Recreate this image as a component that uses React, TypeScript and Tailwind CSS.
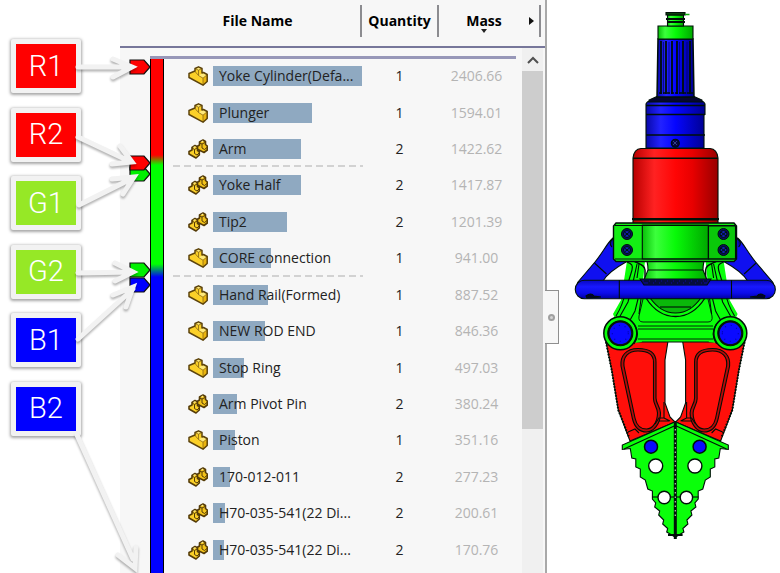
type Part = {
  name: string;
  quantity: number;
  mass: number;
  assembly?: boolean;
  lastOfBand?: boolean;
};

const parts: Part[] = [
  { name: "Yoke Cylinder(Defa...", quantity: 1, mass: 2406.66 },
  { name: "Plunger", quantity: 1, mass: 1594.01 },
  { name: "Arm", quantity: 2, mass: 1422.62, assembly: true, lastOfBand: true },
  { name: "Yoke Half", quantity: 2, mass: 1417.87, assembly: true },
  { name: "Tip2", quantity: 2, mass: 1201.39, assembly: true },
  { name: "CORE connection", quantity: 1, mass: 941.0, lastOfBand: true },
  { name: "Hand Rail(Formed)", quantity: 1, mass: 887.52 },
  { name: "NEW ROD END", quantity: 1, mass: 846.36 },
  { name: "Stop Ring", quantity: 1, mass: 497.03 },
  { name: "Arm Pivot Pin", quantity: 2, mass: 380.24, assembly: true },
  { name: "Piston", quantity: 1, mass: 351.16 },
  { name: "170-012-011", quantity: 2, mass: 277.23, assembly: true },
  { name: "H70-035-541(22 Di...", quantity: 2, mass: 200.61, assembly: true },
  { name: "H70-035-541(22 Di...", quantity: 2, mass: 170.76, assembly: true },
];

const maxMass = 2406.66;

const callouts = [
  { label: "R1", color: "bg-[#ff0000]" },
  { label: "R2", color: "bg-[#ff0000]" },
  { label: "G1", color: "bg-[#96e826]" },
  { label: "G2", color: "bg-[#96e826]" },
  { label: "B1", color: "bg-[#0000ff]" },
  { label: "B2", color: "bg-[#0000ff]" },
];

function PartIcon() {
  return (
    <svg viewBox="0 0 20 20" className="h-5 w-5" stroke="#5c430c" strokeLinejoin="round">
      <path d="M1 7.5 7 5V2.5l3.500-1.700L14 2.500V7l1.500-.5L19.200 8.500v7L15 19.200 1 11.500z" fill="#fbd028" stroke="none" />
      <path d="M15 12.500 19.200 8.500v7L15 19.200z" fill="#eab510" stroke="none" />
      <path d="M7 2.500 10.500.8 14 2.500 10.500 4.200zM10.500 9.500 15.500 6.500l3.700 2L15 12z" fill="#ffe97a" stroke="none" />
      <path d="M7 5.500 10.500 9.500M10.500 4.200v5.300l4.500 2.700V19M7 2.500l3.500 1.700L14 2.500M15 12.200l4.200-3.500" fill="none" stroke="#8a6812" strokeWidth=".8" />
      <path d="M1 7.500 7 5V2.500l3.500-1.700L14 2.500V7l1.500-.5L19.200 8.500v7L15 19.200 1 11.500z" fill="none" strokeWidth="1.500" />
    </svg>
  );
}

function AssemblyIcon() {
  return (
    <svg viewBox="0 0 20 20" className="h-5 w-5" stroke="#553c08" strokeLinejoin="round">
      <path d="M9 7.500 11.500 6V3L15 1l2.500 1.500v3L19.300 7v4L16 13.500 9 10z" fill="#f3c31a" strokeWidth="1.600" />
      <path d="m11.500 4 2.500 1v4l2.500 1.500M14 5l3-1.500M16.500 10.500l2.500-2" fill="none" strokeWidth="1" />
      <path d="M1 12.500 4 11V8.500L7 6.500 9.500 8v3.500l1.800 1V16L8 19 1 15z" fill="#fbd028" strokeWidth="1.600" />
      <path d="m4 9 2.500 1.500v4L9 16M6.500 10.500 9 9M9 16l2-2" fill="none" strokeWidth="1" />
      <path d="m5.500 8.500 2-1M13.500 3 15 2" stroke="#ffef95" strokeWidth="1.200" />
    </svg>
  );
}

function Callouts() {
  return (
    <aside className="w-[120px] shrink-0 bg-white pt-[39px] pl-[11px]">
      <ul className="flex h-[397px] flex-col justify-between">
        {callouts.map((c) => (
          <li
            key={c.label}
            className="h-[54px] w-[70px] rounded-xs bg-[#f2f2f2] p-[5px] shadow-[0_1px_3px_1px_rgba(0,0,0,0.35)]"
          >
            <div
              className={`flex h-full items-center justify-center font-['Roboto',sans-serif] text-[29px] leading-none font-light text-white ${c.color}`}
            >
              {c.label}
            </div>
          </li>
        ))}
      </ul>
    </aside>
  );
}

function Arrows() {
  return (
    <svg
      viewBox="0 0 160 573"
      className="pointer-events-none absolute top-0 left-0 h-[573px] w-40 drop-shadow-[0_2px_1px_rgba(0,0,0,0.3)]"
      fill="none"
      stroke="#f2f2f2"
      strokeWidth="6"
      strokeLinecap="round"
    >
      <path d="M78 67H131M113 59l19 8-19 10" strokeWidth="5" />
      <path d="m78 137 53 25M120 146l12 16-20 2" strokeWidth="5" />
      <path d="m79 205 54-27M112 179l22-2-11 17" strokeWidth="5" />
      <path d="m78 273 54-1M115 263l18 9-18 9" strokeWidth="5" />
      <path d="m78 339 55-50M113 295l20-8-7 20" strokeWidth="5" />
      <path d="m77 435 56 124M118 555l17 13 1-21" strokeWidth="5" />
    </svg>
  );
}

function ColorScale() {
  return (
    <div className="flex w-[44px] shrink-0 pt-[10px]">
      <svg viewBox="0 0 30 500" className="h-[500px] w-[30px] shrink-0" stroke="#111" strokeWidth="1.2">
        <path d="M10 109h14l6 7-6 7H10z" fill="#00f000" />
        <path d="M10 2h14l6 7-6 7H10z" fill="#f00" />
        <path d="M10 98h14l6 7-6 7H10z" fill="#f00" />
        <path d="M10 205h14l6 7-6 7H10z" fill="#00f000" />
        <path d="M10 220h14l6 7-6 7H10z" fill="#00f" />
      </svg>
      <div className="w-[14px] border-x border-t border-black bg-[linear-gradient(#f00_96px,#0f0_106px,#0f0_205px,#00f_218px)]" />
    </div>
  );
}

function PanelHeader() {
  return (
    <div className="h-12 border-b-2 border-[#77779a] pt-[5px] text-black">
      <div className="flex h-8 pl-[35px] text-sm font-bold">
        <button className="flex-1 border-r-2 border-[#8c8c90]">File Name</button>
        <button className="w-[77px] border-r-2 border-[#8c8c90]">Quantity</button>
        <button className="relative w-[90px]">
          Mass
          <svg viewBox="0 0 6 4" className="absolute bottom-1 left-[42px] h-1 w-1.5">
            <path d="M0 0h6L3 4z" fill="#222" />
          </svg>
        </button>
        <button aria-label="More columns" className="mr-1 w-3 border-r-2 border-[#8c8c90]">
          <svg viewBox="0 0 5 8" className="h-2 w-[5px]">
            <path d="M0 0v8l5-4z" fill="#111" />
          </svg>
        </button>
      </div>
    </div>
  );
}

function PartTable() {
  return (
    <div className="mt-2 mr-[6px] -ml-[14px] flex-1 border-t-3 border-[#9797b8] pl-[14px]">
      <table className="-mt-px h-[510px] w-full table-fixed text-sm text-[#222]">
        <colgroup>
          <col className="w-[49px]" />
          <col />
          <col className="w-[77px]" />
          <col className="w-[77px]" />
        </colgroup>
        <tbody>
          {parts.map((part, i) => (
            <tr key={i}>
              <td className="relative pl-6">
                {part.assembly ? <AssemblyIcon /> : <PartIcon />}
                {part.lastOfBand && (
                  <svg className="absolute bottom-0 left-[9px] h-0.5 w-[190px]">
                    <path d="M0 1h190" stroke="#d2d2d2" strokeWidth="2" strokeDasharray="7 4" />
                  </svg>
                )}
              </td>
              <td>
                <div className="relative flex h-5 items-center">
                  <div
                    className="absolute inset-y-0 left-0 bg-[#8fa9c1]"
                    style={{ width: `${(part.mass / maxMass) * 100}%` }}
                  />
                  <span className="relative pl-1.5 whitespace-nowrap">{part.name}</span>
                </div>
              </td>
              <td className="pr-0.5 text-center">{part.quantity}</td>
              <td className="pr-0.5 text-center text-[#b4b4b4]">{part.mass.toFixed(2)}</td>
            </tr>
          ))}
        </tbody>
      </table>
    </div>
  );
}

function Scrollbar() {
  return (
    <div className="mr-0.5 w-[21px] shrink-0 bg-[#f0f0f0] pt-px">
      <button aria-label="Scroll up" className="flex h-[22px] w-full items-center justify-center">
        <svg viewBox="0 0 12 8" className="h-2 w-3" fill="none" stroke="#505050" strokeWidth="2">
          <path d="m1 7 5-5 5 5" />
        </svg>
      </button>
      <div className="h-[358px] bg-[#cdcdcd]" />
    </div>
  );
}

function Bolt({ x, y }: { x: number; y: number }) {
  return (
    <g strokeWidth="1">
      <circle cx={x} cy={y} r="5.5" fill="#0a1060" />
      <circle cx={x} cy={y} r="3.5" fill="#1020b0" />
      <path d={`M${x - 2.5} ${y - 2}l5 4m0-4l-5 4`} />
    </g>
  );
}

// One side of the jaw; the other side is the same drawing mirrored on x = 675.3
function JawSide() {
  return (
    <g>
      <path d="M606 342 611.7 370 618.3 410 630 441l45-19-5-5-5-14V360l3-19z" fill="#ff0f0a" />
      <path d="M606 342 611.7 370 618.3 410 629 437" fill="none" strokeWidth="2" strokeDasharray="1.5 1.5" />
      <path d="M656 362v36c0 6 4.500 9 4.500 15 0 11-7 19-14 19-8 0-12-5-14-13L621 366c-1-10 5-17.500 17-17.500 11 0 18 4 18 13.500z" fill="#b80808" />
      <path d="M653.500 362v37c0 5 4 9 4 14 0 9-5 16-11 16-6 0-10-4-11.500-11l-11-52c-1-9 4-15 14-15s15.500 4 15.500 11z" fill="#ff0f0a" />
      <path d="m628 432 7-3 4 4M664 402v16h-5l-4 6M659 421h10M664 418l6 3" fill="none" />
      <path d="M675.300 421.700 622.300 445v4.500l8-1 1.500 9.500 4 1v8l4.500 2v8l5 3 2.500 9 4.600 2v8l3.300 4-1 4 5 4-1 4 5 5-1 4 5 4.500-1 3.500 8.300 5z" fill="#0aff0a" />
      <path d="m624 449 51.300-23.500" />
      <path d="M652 497h23" />
      <path d="M668 535h7" strokeWidth="2" />
      <circle cx="651" cy="446.7" r="6.5" fill="#0a0aff" strokeWidth="1.5" />
      <circle cx="655.7" cy="466" r="7" fill="#fff" strokeWidth="1.4" />
      <circle cx="664.2" cy="497.5" r="6.2" fill="#fff" strokeWidth="1.4" />
    </g>
  );
}

function YokeSide() {
  return (
    <g>
      <path d="M627 261h18l-2 20-5 20-2 22 6 19-16 2-13-30 8-14z" fill="#0aff0a" stroke="none" />
      <path d="M627 262c5 2 6 3 5 8l-6 20c-2 10-5 18-10 26M637 264l-4 18-5 20-9 16" fill="none" />
      <path d="M639 264l-2 14M638 299l-3 12-6 11M641 299l-2 15" fill="none" />
      <path d="M634 261c5 3 11 4 11 9v10" fill="none" strokeWidth="1.500" />
      <circle cx="620.3" cy="333.3" r="16.5" fill="#0aff0a" strokeWidth="1.500" />
      <path d="M634 324q7 10 0 20" fill="none" />
      <circle cx="620.3" cy="333.3" r="12.5" fill="#07150a" />
      <circle cx="620.3" cy="333.3" r="10.8" fill="#0a0aff" stroke="none" />
      <circle cx="620.3" cy="333.3" r="8" fill="none" stroke="#0000a0" strokeDasharray="1 5" />
    </g>
  );
}

function RailSide() {
  return (
    <g>
      <path d="M613 238c-6 5-9 13-18 24l-17 20c-2 3 0 6 3 6h17l5-7c4-7 14-14 23-19l-1-3z" fill="#1010f0" />
      <path d="m594.500 263 12 11" />
      <path d="M613 239c-3 2-4 5-1 8" fill="#0a0aa0" />
    </g>
  );
}

function Gripper() {
  const mirror = "translate(1350.6 0) scale(-1 1)";
  return (
    <svg viewBox="548 0 232 573" className="mx-auto h-[573px] w-[232px]" stroke="#001008" strokeWidth="1.1">
      <defs>
        <linearGradient id="red">
          <stop offset="0" stopColor="#b80000" />
          <stop offset=".25" stopColor="#ff2222" />
          <stop offset=".5" stopColor="#ff0505" />
          <stop offset=".7" stopColor="#e80000" />
          <stop offset="1" stopColor="#980000" />
        </linearGradient>
        <linearGradient id="blue">
          <stop offset="0" stopColor="#0808a8" />
          <stop offset=".25" stopColor="#2222ff" />
          <stop offset=".5" stopColor="#0505ff" />
          <stop offset="1" stopColor="#000090" />
        </linearGradient>
        <linearGradient id="green">
          <stop offset="0" stopColor="#08c008" />
          <stop offset=".2" stopColor="#3cff3c" />
          <stop offset=".5" stopColor="#08fa08" />
          <stop offset="1" stopColor="#00a800" />
        </linearGradient>
        <linearGradient id="rail" x1="0" y1="0" x2="0" y2="1">
          <stop offset="0" stopColor="#0808c0" />
          <stop offset=".35" stopColor="#1818ff" />
          <stop offset=".7" stopColor="#0c0ce8" />
          <stop offset="1" stopColor="#0000a0" />
        </linearGradient>
      </defs>

      {/* jaws */}
      <JawSide />
      <g transform={mirror}>
        <JawSide />
      </g>
      <path d="M675.300 423v116" strokeWidth="3" />
      <path d="M675.300 429v90" stroke="#b8c8b8" strokeWidth="1.200" strokeDasharray="1.500 3" />

      {/* hand rail behind the clamp */}
      <RailSide />
      <g transform={mirror}>
        <RailSide />
      </g>

      {/* yoke */}
      <path d="M636 281h79l3 42-5 19h-76l-4-19z" fill="#0aff0a" />
      <YokeSide />
      <g transform={mirror}>
        <YokeSide />
      </g>
      <path d="m643 299-4 17q-1 6 4 6h65q5 0 4-6l-4-17" fill="none" strokeWidth=".9" />
      <path d="M638 326h75M638 329h75M638 339h75" fill="none" strokeWidth=".9" />
      <path d="M646 298c7 11 16 18.500 29.500 18.500S698 309 705 298z" fill="#0aff0a" strokeWidth="1.300" />
      <path d="M650 298c7 9 14 15 25.500 15S694 307 701 298z" fill="#0ab80a" />
      <path d="M660 307h31" fill="none" />
      <path d="M647 261h57c-1 5-1 5-1 9l4 10h-63l4-10c0-4 0-4-1-9z" fill="url(#green)" />
      <path d="M648 270h55" />

      {/* front rail */}
      <rect x="575.3" y="280.3" width="200" height="18.400" rx="9" fill="url(#rail)" />
      <path d="M619.300 280v18.500M731.500 280v18.500" />
      <path d="m640 279 4 6h63l4-6z" fill="#0a0a70" />
      <path d="M644 281h63M648 283h56" strokeDasharray="5 1" />
      <path d="M586 296q5-4 8 0l7 1-14 1zM765 296q-5-4-8 0l-7 1 14 1z" fill="#000030" />

      {/* cylinder */}
      <path d="M633 220h85v4h-85z" fill="url(#red)" />
      <path d="M633 158q1-9 8-9.500h69q7 .5 8 9.500v61h-85z" fill="url(#red)" />
      <path d="M633 158.300h85" strokeWidth="1.500" />
      <path d="M632 219h87" strokeWidth="2.200" />

      {/* clamp block */}
      <path d="M616 223h118l2.500 3v33l-2.500 2.500H616l-2.500-2.500v-33z" fill="#14ee14" strokeWidth="1.400" />
      <path d="M642.300 225h66v34h-66z" fill="url(#green)" />
      <path d="M708.500 226h27v33h-27z" fill="#0ac80a" />
      <path d="M615 225.500h120M615 259h120" />
      <Bolt x={627} y={234} />
      <Bolt x={627} y={250} />
      <Bolt x={723.5} y={234} />
      <Bolt x={723.5} y={250} />

      {/* connector */}
      <path d="M646 104q1-3 5-3h49q4 0 5 3v10.500h-1V148h-58v-33.500z" fill="url(#blue)" />
      <path d="M646 105.500h59M646 114.500h59M646 135h59" strokeWidth="1.400" />
      <circle cx="675.3" cy="143.300" r="4" fill="#060640" />
      <path d="m673 141 4 4m0-4-4 4" stroke="#4050a0" strokeWidth=".8" />
      <path d="m658 96-9 4v2h53v-2l-9-4z" fill="#060630" />
      <path d="M658 39h35l1 58h-37z" fill="url(#blue)" strokeWidth="1.500" />
      <path d="M661 41v53M666 41v53M672 41v53M677 41v53M683 41v53M690 41v53" strokeWidth="1.800" />
      <path d="M663.500 42v52M669 42v52M679.500 42v52M687 42v52" stroke="#000060" strokeWidth=".7" />
      <path d="M659 93h34" strokeWidth="1.500" strokeDasharray="3 1" />
      <path d="M658 26h35v13h-35z" fill="url(#green)" />
      <path d="M667.500 15h16v11h-16z" fill="url(#green)" />
      <path d="M666 12.500h19v2.500h-19z" fill="#0a400a" />
      <path d="M666 19h19M667 22h18" strokeWidth="2" />
      <path d="M685 14.500h4.500" stroke="#0cb00c" strokeWidth="1.500" />
    </svg>
  );
}

export default function App() {
  return (
    <div className="relative flex min-h-screen bg-white font-['Open_Sans','Noto_Sans',sans-serif]">
      <Callouts />
      <section className="flex w-[427px] shrink-0 flex-col border-r-2 border-[#a9a9a9] bg-[#f7f7f7]">
        <PanelHeader />
        <div className="flex flex-1">
          <ColorScale />
          <PartTable />
          <Scrollbar />
        </div>
      </section>
      <main className="relative flex-1">
        <button
          aria-label="Collapse panel"
          className="absolute top-[290px] -left-0.5 flex h-[54px] w-[14px] items-center justify-center border border-l-0 border-[#8f8f8f] bg-[#f7f7f7]"
        >
          <span className="h-[7px] w-[7px] rounded-full border-2 border-[#a0a0a0] bg-[#d4d4d4]" />
        </button>
        <Gripper />
      </main>
      <Arrows />
    </div>
  );
}
